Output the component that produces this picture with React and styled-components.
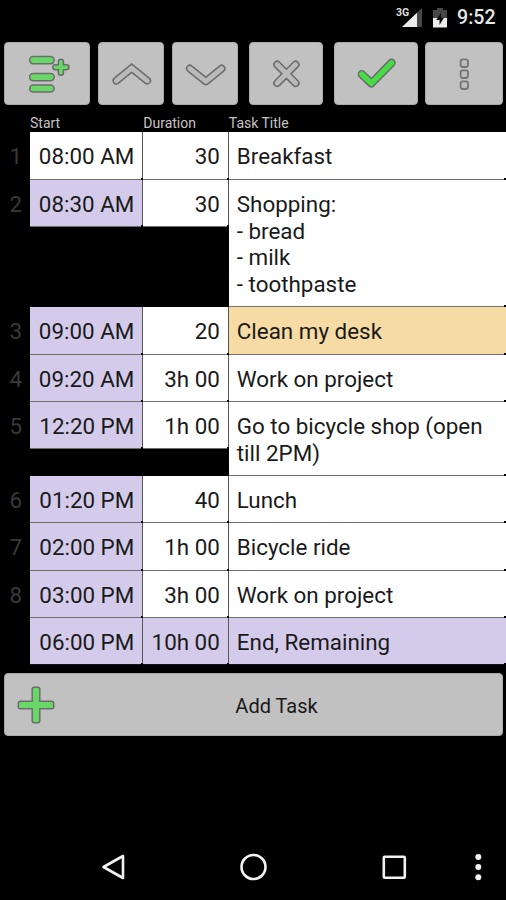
import React from "react";
import styled, { createGlobalStyle } from "styled-components";

const GlobalStyle = createGlobalStyle`
  body {
    margin: 0;
    background: #000;
    font-family: Roboto, "Noto Sans", sans-serif;
  }
  button {
    font-family: inherit;
  }
`;

const Screen = styled.div`
  width: 506px;
  height: 900px;
  background: #000;
  display: flex;
  flex-direction: column;
  overflow: hidden;
`;

const StatusBar = styled.header`
  height: 42.4px;
  box-sizing: border-box;
  padding: 7px 10px 0 0;
  display: flex;
  justify-content: flex-end;
  align-items: flex-start;
`;
const Signal = styled.div`
  position: relative;
  width: 26px;
  height: 20px;
  margin-right: 10px;
`;
const Network = styled.span`
  position: absolute;
  left: -1px;
  top: 0;
  font-size: 10.5px;
  line-height: 11px;
  font-weight: 700;
  color: #ddd;
`;
const Clock = styled.span`
  width: 39px;
  margin-left: 10px;
  font-size: 19.6px;
  line-height: 22px;
  font-weight: 500;
  color: #e6e6e6;
  white-space: nowrap;
`;

const Toolbar = styled.nav`
  height: 62.6px;
  padding-left: 4px;
  display: flex;
`;
const ToolButton = styled.button`
  width: ${(p) => p.$width}px;
  height: 63px;
  margin: 0 ${(p) => p.$gap}px 0 0;
  padding: 0;
  flex: none;
  display: flex;
  border: 1px solid #aaa;
  border-radius: 4px;
  background: #c1c1c1;
  overflow: hidden;
`;

const Table = styled.main`
  display: flex;
  flex-direction: column;
`;
const Row = styled.div`
  display: grid;
  grid-template-columns: 30px 113.3px 85.5px 1fr;
  align-items: start;
`;
const HeadRow = styled(Row)`
  height: 27.5px;
`;
const Heading = styled.span`
  grid-column: ${(p) => p.$column};
  padding-top: 9px;
  font-size: 14px;
  line-height: 18px;
  color: #c4c4c4;
  white-space: nowrap;
`;
const RowNumber = styled.div`
  padding: 11px 8px 0 0;
  font-size: 22.4px;
  line-height: 26.7px;
  text-align: right;
  color: #393939;
`;
const Cell = styled.div`
  position: relative;
  box-sizing: border-box;
  padding: 11px 8px 8.65px;
  border-right: 1px solid #555;
  border-bottom: 1px solid #6f6f6f;
  background: ${(p) => p.$color || "#fff"};
  color: #1a1a1a;
  font-size: 22.4px;
  line-height: 26.7px;
  text-align: ${(p) => p.$align || "left"};
  white-space: pre-line;

  /* dark knot where the grid lines cross */
  &::after {
    content: "";
    position: absolute;
    right: -1px;
    bottom: -1px;
    width: 2px;
    height: 2px;
    background: #000;
  }
  ${Row}:last-child > & {
    border-bottom-color: #16131f;
  }
`;
const TitleCell = styled(Cell)`
  border-right: 0;

  &::after {
    right: 0;
  }
`;

const AddButton = styled.button`
  height: 63px;
  margin: 8px 3px 0 4px;
  padding: 0 0 0 12px;
  display: grid;
  grid-template-columns: 38px 1fr;
  align-items: center;
  flex: none;
  border: 1px solid #aaa;
  border-radius: 4px;
  background: #c1c1c1;
  color: #1a1a1a;
  font-size: 20px;
`;
const AddLabel = styled.span`
  padding: 2px 4px 0 0;
`;

const NavBar = styled.footer`
  height: 66px;
  margin-top: auto;
  display: grid;
  grid-template-columns: 183px 141px 140px 1fr;
  align-items: center;
`;
const NavItem = styled.div`
  display: flex;
  padding-left: ${(p) => p.$left}px;
`;

const LILAC = "#d4cbea";
const AMBER = "#f6dba4";

const tasks = [
  { no: 1, start: "08:00 AM", duration: "30", title: "Breakfast", fixed: true },
  {
    no: 2,
    start: "08:30 AM",
    duration: "30",
    title: "Shopping:\n- bread\n- milk\n- toothpaste"
  },
  { no: 3, start: "09:00 AM", duration: "20", title: "Clean my desk", titleColor: AMBER },
  { no: 4, start: "09:20 AM", duration: "3h 00", title: "Work on project" },
  { no: 5, start: "12:20 PM", duration: "1h 00", title: "Go to bicycle shop (open till 2PM)" },
  { no: 6, start: "01:20 PM", duration: "40", title: "Lunch" },
  { no: 7, start: "02:00 PM", duration: "1h 00", title: "Bicycle ride" },
  { no: 8, start: "03:00 PM", duration: "3h 00", title: "Work on project" },
  {
    start: "06:00 PM",
    duration: "10h 00",
    title: "End, Remaining",
    durationColor: LILAC,
    titleColor: LILAC
  }
];

// a thick line with a thin dark rim
function Rimmed({ d, color = "#bababa", width = 8.4, rim = 1.5, cap = "round", join = "round" }) {
  return (
    <g fill="none" strokeLinecap={cap} strokeLinejoin={join}>
      <path d={d} stroke="#6c6c6c" strokeWidth={width} />
      <path d={d} stroke={color} strokeWidth={width - rim * 2} />
    </g>
  );
}

function ToolIcon({ width, children }) {
  return (
    <svg width={width - 2} height="61" viewBox={`0.6 0.2 ${width - 2} 61`}>
      {children}
    </svg>
  );
}

const tools = [
  {
    label: "Insert",
    width: 86,
    gap: 8,
    icon: (
      <>
        <Rimmed color="#68d768" width={8.6} d="M28.8 17.3h17.4M28.8 34.3h17.4M28.8 45.7h17.4" />
        <Rimmed color="#68d768" width={6.6} d="M51 24.5h11M56.5 19v11" />
      </>
    )
  },
  {
    label: "Move up",
    width: 66,
    gap: 7.5,
    icon: <Rimmed join="miter" width={8} d="M18 37.8 33.3 25.3 48.8 37.8" />
  },
  {
    label: "Move down",
    width: 66.5,
    gap: 11,
    icon: <Rimmed width={8} d="M17.5 25.8 33.5 38.6 49.2 25.8" />
  },
  {
    label: "Delete",
    width: 74,
    gap: 10.5,
    icon: <Rimmed width={8} d="M27.8 21.8 46.2 40.3M46.2 21.8 27.8 40.3" />
  },
  {
    label: "Done",
    width: 84,
    gap: 7,
    icon: <Rimmed color="#45dc45" width={8.4} d="M27.4 31.4 37 40.6 57.2 20" />
  },
  {
    label: "More",
    width: 78.5,
    gap: 0,
    icon: (
      <g fill="#bdbdbd" stroke="#747474" strokeWidth="1.8">
        <rect x="35.2" y="16.6" width="7.4" height="7.6" rx="2.2" />
        <rect x="35.2" y="27.6" width="7.4" height="7.6" rx="2.2" />
        <rect x="35.2" y="38.6" width="7.4" height="7.6" rx="2.2" />
      </g>
    )
  }
];

export default function App() {
  return (
    <>
      <GlobalStyle />
      <Screen>
        <StatusBar>
          <Signal>
            <svg width="26" height="20">
              <path d="M5 20 25 1v19z" fill="#474747" />
              <path d="M5 20 20 5.7V20z" fill="#ececec" />
            </svg>
            <Network>3G</Network>
          </Signal>
          <svg width="14" height="21" viewBox="0 0 14 21">
            <path d="M4 1h6v2h4v8H0V3h4z" fill="#474747" />
            <path d="M0 11h14v9.5H0z" fill="#ececec" />
            <path d="M8 5.5 3.2 13H6.5v5L11 10.8H8z" fill="#111" />
          </svg>
          <Clock>9:52</Clock>
        </StatusBar>

        <Toolbar>
          {tools.map(({ label, width, gap, icon }) => (
            <ToolButton key={label} aria-label={label} $width={width} $gap={gap}>
              <ToolIcon width={width}>{icon}</ToolIcon>
            </ToolButton>
          ))}
        </Toolbar>

        <Table>
          <HeadRow>
            <Heading $column={2}>Start</Heading>
            <Heading $column={3}>Duration</Heading>
            <Heading $column={4}>Task Title</Heading>
          </HeadRow>
          {tasks.map((task) => (
            <Row key={task.start}>
              <RowNumber>{task.no}</RowNumber>
              <Cell $color={task.fixed ? "#fff" : LILAC} $align="right">
                {task.start}
              </Cell>
              <Cell $color={task.durationColor} $align="right">
                {task.duration}
              </Cell>
              <TitleCell $color={task.titleColor}>{task.title}</TitleCell>
            </Row>
          ))}
        </Table>

        <AddButton>
          <svg width="38" height="38" viewBox="0 0 38 38">
            <path
              d="M17.2 1.3h3.6q2 0 2 2v11.9h11.9q2 0 2 2v3.6q0 2-2 2H22.8v11.9q0 2-2 2h-3.6q-2 0-2-2V22.8H3.3q-2 0-2-2v-3.6q0-2 2-2h11.9V3.3q0-2 2-2z"
              fill="#68d768"
              stroke="#6c6c6c"
              strokeWidth="1.5"
            />
          </svg>
          <AddLabel>Add Task</AddLabel>
        </AddButton>

        <NavBar>
          <NavItem $left={100}>
            <svg width="26" height="28" fill="none" stroke="#f2f2f2" strokeWidth="2.6">
              <path d="M3.5 14 23 3v22z" strokeLinejoin="round" />
            </svg>
          </NavItem>
          <NavItem $left={56}>
            <svg width="28" height="28" fill="none" stroke="#f2f2f2" strokeWidth="2.6">
              <circle cx="14.5" cy="14" r="12" />
            </svg>
          </NavItem>
          <NavItem $left={57}>
            <svg width="28" height="28" fill="none" stroke="#f2f2f2" strokeWidth="2.6">
              <rect x="2.8" y="3.7" width="21" height="21" rx="1" />
            </svg>
          </NavItem>
          <NavItem $left={10}>
            <svg width="8" height="28" fill="#f2f2f2">
              <circle cx="4.3" cy="4" r="3" />
              <circle cx="4.3" cy="14" r="3" />
              <circle cx="4.3" cy="24.3" r="3" />
            </svg>
          </NavItem>
        </NavBar>
      </Screen>
    </>
  );
}
